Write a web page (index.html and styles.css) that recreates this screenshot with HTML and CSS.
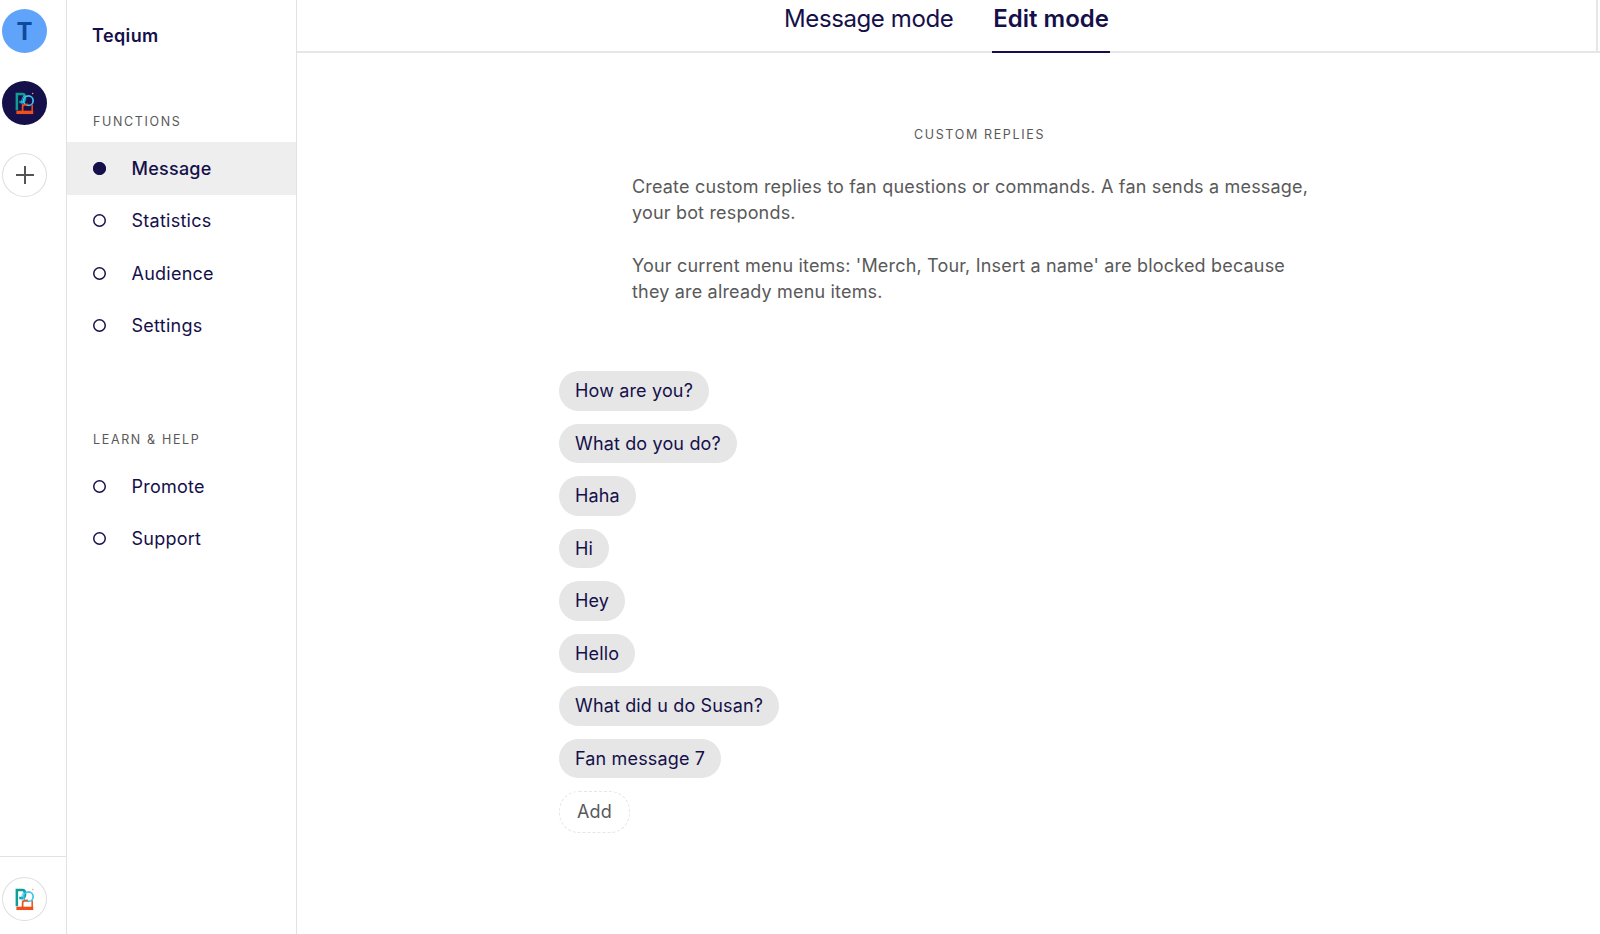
FILE: index.html
```html
<!DOCTYPE html>
<html lang="en">
<head>
    <meta charset="UTF-8">
    <meta name="viewport" content="width=device-width, initial-scale=1.0">
    <title>Teqium - Edit mode</title>
    <link rel="stylesheet" href="styles.css">
</head>
<body>
    <svg class="defs" width="0" height="0" aria-hidden="true">
        <symbol id="logo" viewBox="0 0 20 24">
            <path d="M1.5 19V2.2H7.5C11 2.2 11 10.5 7.5 10.5H4" fill="none" stroke="#0f9d94" stroke-width="2.6"/>
            <path d="M7.8 15C5.6 10 7 5.5 9.5 3.5" fill="none" stroke="#39c6ee" stroke-width="1"/>
            <circle cx="13.5" cy="9" r="5" fill="none" stroke="#39c6ee" stroke-width="1.8"/>
            <path d="M7.5 20V15.5C7.5 13.5 10 13 13 13" fill="none" stroke="#f04e1c" stroke-width="1.8"/>
            <path d="M17.5 13V20" fill="none" stroke="#f04e1c" stroke-width="1.6"/>
            <path d="M1 19.5H18.6V23H1Z" fill="#f04e1c"/>
            <circle cx="18" cy="1.6" r="0.8" fill="#f3a08a"/>
        </symbol>
    </svg>

    <div class="app">
        <!-- workspace rail -->
        <nav class="rail">
            <div class="rail-top">
                <div class="avatar avatar-t">T</div>
                <div class="avatar avatar-dark"><svg class="logo"><use href="#logo"/></svg></div>
                <div class="avatar avatar-add">
                    <svg viewBox="0 0 20 20" width="20" height="20"><path d="M10 1V19M1 10H19" stroke="#555" stroke-width="2"/></svg>
                </div>
            </div>
            <div class="rail-bottom">
                <div class="avatar avatar-add"><svg class="logo"><use href="#logo"/></svg></div>
            </div>
        </nav>

        <aside class="sidebar">
            <div class="brand">Teqium</div>

            <div class="section-label first">FUNCTIONS</div>
            <ul class="menu">
                <li class="active"><span class="dot"></span>Message</li>
                <li><span class="dot"></span>Statistics</li>
                <li><span class="dot"></span>Audience</li>
                <li><span class="dot"></span>Settings</li>
            </ul>

            <div class="section-label second">LEARN &amp; HELP</div>
            <ul class="menu">
                <li><span class="dot"></span>Promote</li>
                <li><span class="dot"></span>Support</li>
            </ul>
        </aside>

        <main class="content">
            <header class="tabs">
                <div class="tabs-inner">
                    <div class="tab">Message mode</div>
                    <div class="tab tab-active">Edit mode</div>
                </div>
            </header>

            <section class="replies">
                <h2 class="replies-title">CUSTOM REPLIES</h2>
                <div class="intro">
                    <p>Create custom replies to fan questions or commands. A fan sends a message, your bot responds.</p>
                    <p>Your current menu items: 'Merch, Tour, Insert a name' are blocked because they are already menu items.</p>
                </div>

                <div class="chips">
                    <div class="chip">How are you?</div>
                    <div class="chip">What do you do?</div>
                    <div class="chip">Haha</div>
                    <div class="chip">Hi</div>
                    <div class="chip">Hey</div>
                    <div class="chip">Hello</div>
                    <div class="chip">What did u do Susan?</div>
                    <div class="chip">Fan message 7</div>
                    <div class="chip chip-add">Add</div>
                </div>
            </section>
        </main>
    </div>
</body>
</html>
```

FILE: styles.css
```css
* {
    box-sizing: border-box;
}
html, body {
    margin: 0;
    height: 100%;
    overflow: hidden;
}
body {
    font-family: Inter, "Noto Sans", sans-serif;
    color: #15104a;
    background: #fff;
}
.defs {
    position: absolute;
}
.app {
    display: flex;
    height: 934px;
}

/* workspace rail */
.rail {
    width: 67px;
    flex-shrink: 0;
    border-right: 1px solid #e2e2e2;
    display: flex;
    flex-direction: column;
    justify-content: space-between;
}
.rail-top {
    padding: 9px 0 0 2px;
    display: flex;
    flex-direction: column;
    gap: 28px;
}
.rail-bottom {
    border-top: 1px solid #e2e2e2;
    height: 78px;
    padding: 20px 0 0 2px;
}
.avatar {
    width: 45px;
    height: 44px;
    border-radius: 50%;
    display: flex;
    align-items: center;
    justify-content: center;
}
.avatar-t {
    background: #5fa3fb;
    color: #0d4b9e;
    font-size: 24px;
    font-weight: 700;
}
.avatar-dark {
    background: #15104a;
}
.avatar-add {
    border: 1px solid #dedede;
    background: #fff;
}
.logo {
    width: 20px;
    height: 23px;
}

/* sidebar */
.sidebar {
    width: 230px;
    flex-shrink: 0;
    border-right: 1px solid #e2e2e2;
}
.brand {
    font-size: 18px;
    font-weight: 600;
    letter-spacing: 0.4px;
    padding: 26px 0 0 25px;
    line-height: 20px;
}
.section-label {
    font-size: 12.5px;
    letter-spacing: 1.65px;
    color: #595959;
    line-height: 16px;
    padding-left: 26px;
}
.first {
    margin-top: 68px;
    margin-bottom: 12px;
}
.second {
    margin-top: 80px;
    margin-bottom: 12px;
}
.menu {
    list-style: none;
    margin: 0;
    padding: 0;
}
.menu li {
    height: 52.5px;
    display: flex;
    align-items: center;
    padding-left: 26px;
    font-size: 18px;
    letter-spacing: 0.25px;
}
.menu .active {
    background: #eeeeee;
    font-weight: 500;
}
.dot {
    width: 13px;
    height: 13px;
    box-shadow: inset 0 0 0 1.5px #15104a;
    border-radius: 50%;
    margin-right: 25.5px;
}
.active .dot {
    background: #15104a;
}

/* tabs */
.content {
    flex: 1;
    min-width: 0;
}
.tabs {
    height: 53px;
    border-bottom: 2px solid #e6e6e6;
    padding-right: 2px;
}
.tabs-inner {
    height: 51px;
    border-right: 2px solid #e6e6e6;
    display: flex;
    justify-content: center;
    gap: 39px;
    padding-left: 1px;
}
.tab {
    height: 53px;
    padding-top: 3px;
    font-size: 24px;
    line-height: 31px;
    letter-spacing: -0.4px;
}
.tab-active {
    font-weight: 600;
    letter-spacing: 0;
    padding-left: 1px;
    padding-right: 1px;
    border-bottom: 2px solid #15104a;
}

/* custom replies */
.replies {
    padding-left: 262px;
}
.replies-title {
    margin: 74px 0 0;
    font-size: 12.5px;
    font-weight: 400;
    letter-spacing: 1.65px;
    color: #595959;
    line-height: 16px;
    width: 841px;
    text-align: center;
}
.intro {
    margin: 31px 0 0 73px;
    width: 685px;
    font-size: 18px;
    letter-spacing: 0.18px;
    line-height: 26.2px;
    color: #595959;
}
.intro p {
    margin: 0 0 26.2px;
}
.chips {
    margin-top: 66px;
    display: flex;
    flex-direction: column;
    align-items: flex-start;
    gap: 13px;
}
.chip {
    height: 39.5px;
    padding: 0 16px;
    border-radius: 20px;
    background: #e6e6e6;
    font-size: 18px;
    letter-spacing: 0.15px;
    line-height: 39.5px;
}
.chip-add {
    height: 42px;
    padding: 0 17px;
    line-height: 40px;
    background: #fff;
    border: 1px dashed #e6e6e6;
    color: #595959;
}
```
